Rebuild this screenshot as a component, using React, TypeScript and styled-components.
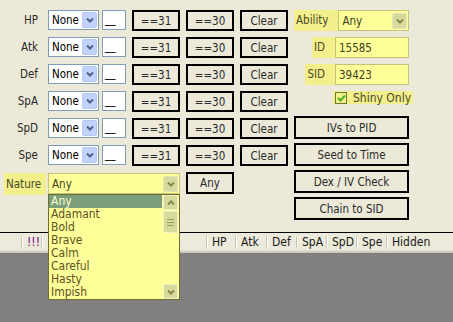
import styled, { createGlobalStyle } from "styled-components";

const GlobalStyle = createGlobalStyle`
  html, body {
    margin: 0;
    padding: 0;
    background: #808080;
  }
  body {
    font-family: "DejaVu Sans Condensed", "Liberation Sans", Arial, sans-serif;
    font-size: 11.5px;
    font-weight: 400;
  }
`;

const Window = styled.div`
  display: flex;
  flex-direction: column;
  width: 453px;
  height: 322px;
  overflow: hidden;
`;

const Form = styled.div`
  position: relative;
  z-index: 2;
  display: flex;
  height: 222px;
  padding-top: 10px;
  background: #ece9d8;
  border-bottom: 1px solid #000;
`;

const LeftCol = styled.div`
  display: flex;
  flex-direction: column;
  gap: 6px;
  width: 288px;
`;

const StatRow = styled.div`
  display: flex;
  align-items: flex-start;
  height: 21px;
`;

const StatLabel = styled.div`
  width: 38px;
  margin-right: 10px;
  text-align: right;
  line-height: 20px;
  color: #2a2a2a;
`;

const BlueSelect = styled.div`
  box-sizing: border-box;
  display: flex;
  align-items: center;
  justify-content: space-between;
  width: 51px;
  height: 20px;
  padding: 0 1px 0 3px;
  background: #fff;
  border: 1px solid #7f9db9;
  color: #000;
`;

const ArrowButton = styled.div<{ $tone: "blue" | "olive" }>`
  box-sizing: border-box;
  display: flex;
  align-items: center;
  justify-content: center;
  width: 15px;
  height: 16px;
  border-radius: 2px;
  background: ${(p) => (p.$tone === "blue" ? "#c1d3fb" : "#d6da9c")};
  border: 1px solid ${(p) => (p.$tone === "blue" ? "#b4c8f6" : "#e4e6b8")};
`;

const IvBox = styled.div`
  box-sizing: border-box;
  width: 24px;
  height: 20px;
  margin-left: 3px;
  padding-left: 2px;
  background: #fff;
  border: 1px solid #7f9db9;
  line-height: 17px;
  color: #000;
`;

const FlatButton = styled.button<{ $lift?: boolean }>`
  box-sizing: border-box;
  width: 48px;
  height: ${(p) => (p.$lift ? "22px" : "21px")};
  margin: ${(p) => (p.$lift ? "-1px 0 0 6px" : "0 0 0 6px")};
  padding: 0;
  background: #ece9d8;
  border: 2px solid #000;
  font-family: inherit;
  font-size: inherit;
  font-weight: 400;
  color: #2a2a2a;
`;

const NatureRow = styled.div`
  display: flex;
  align-items: flex-start;
  height: 22px;
  margin-top: 1px;
`;

const Highlight = styled.div`
  background: #f3ef8b;
  color: #4a4a2a;
`;

const NatureLabel = styled(Highlight)`
  width: 40px;
  height: 22px;
  margin: 0 2px 0 4px;
  padding-left: 2px;
  line-height: 22px;
`;

const ComboWrap = styled.div`
  position: relative;
`;

const YellowBox = styled.div<{ $width: number }>`
  box-sizing: border-box;
  display: flex;
  align-items: center;
  justify-content: space-between;
  width: ${(p) => p.$width}px;
  height: 21px;
  padding: 0 1px 0 3px;
  background: #ffff99;
  border: 1px solid #c4c47c;
  color: #40401e;
`;

const DropList = styled.div`
  position: absolute;
  top: 21px;
  left: 0;
  box-sizing: border-box;
  display: flex;
  width: 132px;
  height: 106px;
  background: #ffff99;
  border: 1px solid #6e6e2e;
`;

const Items = styled.div`
  flex: 1;
  display: flex;
  flex-direction: column;
`;

const Item = styled.div<{ $selected?: boolean }>`
  height: 13px;
  padding-left: 2px;
  line-height: 13px;
  font-size: 12px;
  background: ${(p) => (p.$selected ? "#7b9e7a" : "transparent")};
  color: ${(p) => (p.$selected ? "#ffffd0" : "#5c5026")};
`;

const ScrollTrack = styled.div`
  display: flex;
  flex-direction: column;
  justify-content: space-between;
  width: 15px;
  padding: 0 1px;
`;

const ScrollTop = styled.div`
  display: flex;
  flex-direction: column;
  gap: 1px;
`;

const ScrollBtn = styled.div<{ $tall?: number }>`
  box-sizing: border-box;
  display: flex;
  align-items: center;
  justify-content: center;
  width: 15px;
  height: ${(p) => p.$tall ?? 15}px;
  border-radius: 2px;
  background: #d6da9c;
  border: 1px solid #eef0c6;
`;

const Grip = styled.div`
  position: relative;
  width: 7px;
  height: 5px;
  border-top: 1px solid #9a9a5a;
  border-bottom: 1px solid #9a9a5a;
  &::after {
    content: "";
    position: absolute;
    left: 0;
    right: 0;
    top: 2px;
    border-top: 1px solid #9a9a5a;
  }
`;

const RightCol = styled.div`
  display: flex;
  flex-direction: column;
  gap: 6px;
  width: 115px;
  margin-left: 6px;
`;

const FieldRow = styled.div`
  display: flex;
  justify-content: flex-end;
  height: 21px;
`;

const FieldLabel = styled(Highlight)`
  padding: 0 10px 0 2px;
  line-height: 21px;
`;

const ShinyRow = styled(Highlight)`
  display: flex;
  align-items: center;
  gap: 6px;
  align-self: flex-start;
  height: 13px;
  margin-left: 39px;
  padding: 0 2px;
  white-space: nowrap;
  font-size: 12px;
`;

const CheckBox = styled.div`
  box-sizing: border-box;
  display: flex;
  align-items: center;
  justify-content: center;
  width: 12px;
  height: 12px;
  border: 1px solid #6b7a34;
`;

const ButtonStack = styled.div`
  display: flex;
  flex-direction: column;
  gap: 4px;
  margin-top: 6px;
`;

const ActionButton = styled.button`
  box-sizing: border-box;
  width: 115px;
  height: 23px;
  padding: 0;
  background: #ece9d8;
  border: 2px solid #000;
  font-family: inherit;
  font-size: inherit;
  font-weight: 400;
  color: #2a2a2a;
`;

const HeaderBar = styled.div`
  display: flex;
  height: 20px;
  background: linear-gradient(
    to bottom,
    #ebeadb 0 17px,
    #e2decd 17px 18px,
    #d6d2c2 18px 19px,
    #cbc7b8 19px 20px
  );
`;

const HeaderCell = styled.div<{ $width?: number; $first?: boolean; $alert?: boolean }>`
  position: relative;
  flex: ${(p) => (p.$width ? `0 0 ${p.$width}px` : "1")};
  box-sizing: border-box;
  padding-left: 6px;
  line-height: 18px;
  font-size: 12px;
  white-space: nowrap;
  color: ${(p) => (p.$alert ? "#800080" : "#1a1a1a")};
  &::before {
    content: "";
    display: ${(p) => (p.$first ? "none" : "block")};
    position: absolute;
    left: 0;
    top: 3px;
    width: 1px;
    height: 13px;
    background: #c7c5b2;
    box-shadow: 1px 0 0 #fff;
  }
`;

const ListArea = styled.div`
  flex: 1;
  background: #808080;
`;

function Chevron({ color, up }: { color: string; up?: boolean }) {
  return (
    <svg width="8" height="6" viewBox="0 0 8 6">
      <path
        d={up ? "M1 4.5 L4 1.5 L7 4.5" : "M1 1.5 L4 4.5 L7 1.5"}
        fill="none"
        stroke={color}
        strokeWidth="2"
      />
    </svg>
  );
}

const stats = ["HP", "Atk", "Def", "SpA", "SpD", "Spe"];
const natures = ["Any", "Adamant", "Bold", "Brave", "Calm", "Careful", "Hasty", "Impish"];
// the columns between "!!!" and "HP" sit under the open nature list
const columns: { label: string; width?: number }[] = [
  { label: "", width: 21 },
  { label: "!!!", width: 20 },
  { label: "", width: 91 },
  { label: "", width: 74 },
  { label: "HP", width: 29 },
  { label: "Atk", width: 31 },
  { label: "Def", width: 30 },
  { label: "SpA", width: 30 },
  { label: "SpD", width: 30 },
  { label: "Spe", width: 30 },
  { label: "Hidden" },
];

export default function App() {
  return (
    <>
      <GlobalStyle />
      <Window>
        <Form>
          <LeftCol>
            {stats.map((stat) => (
              <StatRow key={stat}>
                <StatLabel>{stat}</StatLabel>
                <BlueSelect>
                  None
                  <ArrowButton $tone="blue">
                    <Chevron color="#4d6185" />
                  </ArrowButton>
                </BlueSelect>
                <IvBox>__</IvBox>
                <FlatButton>==31</FlatButton>
                <FlatButton>==30</FlatButton>
                <FlatButton>Clear</FlatButton>
              </StatRow>
            ))}
            <NatureRow>
              <NatureLabel>Nature</NatureLabel>
              <ComboWrap>
                <YellowBox $width={132}>
                  Any
                  <ArrowButton $tone="olive">
                    <Chevron color="#8a8a48" />
                  </ArrowButton>
                </YellowBox>
                <DropList>
                  <Items>
                    {natures.map((n, i) => (
                      <Item key={n} $selected={i === 0}>
                        {n}
                      </Item>
                    ))}
                  </Items>
                  <ScrollTrack>
                    <ScrollTop>
                      <ScrollBtn>
                        <Chevron color="#8a8a48" up />
                      </ScrollBtn>
                      <ScrollBtn $tall={22}>
                        <Grip />
                      </ScrollBtn>
                    </ScrollTop>
                    <ScrollBtn>
                      <Chevron color="#8a8a48" />
                    </ScrollBtn>
                  </ScrollTrack>
                </DropList>
              </ComboWrap>
              <FlatButton $lift>Any</FlatButton>
            </NatureRow>
          </LeftCol>
          <RightCol>
            <FieldRow>
              <FieldLabel>Ability</FieldLabel>
              <YellowBox $width={74}>
                Any
                <ArrowButton $tone="olive">
                  <Chevron color="#8a8a48" />
                </ArrowButton>
              </YellowBox>
            </FieldRow>
            <FieldRow>
              <FieldLabel>ID</FieldLabel>
              <YellowBox $width={74}>15585</YellowBox>
            </FieldRow>
            <FieldRow>
              <FieldLabel>SID</FieldLabel>
              <YellowBox $width={74}>39423</YellowBox>
            </FieldRow>
            <ShinyRow>
              <CheckBox>
                <svg width="9" height="8" viewBox="0 0 9 8">
                  <path d="M1 4 L3.5 6.5 L8 1.5" fill="none" stroke="#4cb41e" strokeWidth="2" />
                </svg>
              </CheckBox>
              Shiny Only
            </ShinyRow>
            <ButtonStack>
              <ActionButton>IVs to PID</ActionButton>
              <ActionButton>Seed to Time</ActionButton>
              <ActionButton>Dex / IV Check</ActionButton>
              <ActionButton>Chain to SID</ActionButton>
            </ButtonStack>
          </RightCol>
        </Form>
        <HeaderBar>
          {columns.map((c, i) => (
            <HeaderCell key={i} $width={c.width} $first={i === 0} $alert={c.label === "!!!"}>
              {c.label}
            </HeaderCell>
          ))}
        </HeaderBar>
        <ListArea />
      </Window>
    </>
  );
}
